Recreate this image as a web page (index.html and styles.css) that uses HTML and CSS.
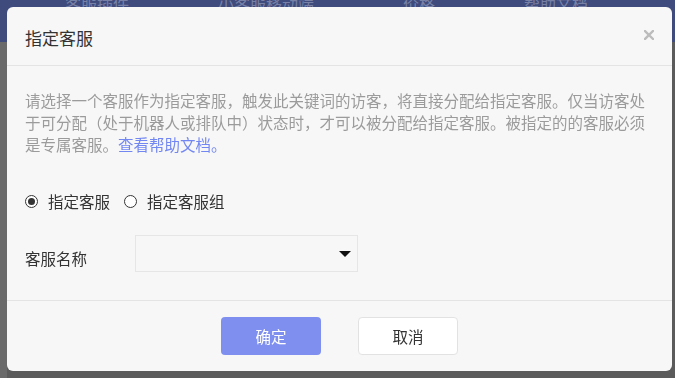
FILE: index.html
```html
<!DOCTYPE html>
<html lang="zh-CN">
<head>
  <meta charset="UTF-8">
  <meta name="viewport" content="width=device-width, initial-scale=1.0">
  <title>指定客服</title>
  <link rel="stylesheet" href="styles.css">
</head>
<body>
  <div class="page">
    <div class="topbar">
      <div class="nav">
        <span class="nav-item">客服插件</span>
        <span class="nav-item">小客服移动端</span>
        <span class="nav-item">价格</span>
        <span class="nav-item">帮助文档</span>
      </div>
    </div>
    <div class="backdrop"></div>
  </div>

  <div class="modal">
    <div class="modal-header">
      <h2 class="modal-title">指定客服</h2>
      <svg class="close" width="10" height="10" viewBox="0 0 10 10">
        <path d="M1 1 L9 9 M9 1 L1 9" stroke="#bcbcbc" stroke-width="2.4" stroke-linecap="square"/>
      </svg>
    </div>

    <div class="modal-body">
      <p class="tips">请选择一个客服作为指定客服，触发此关键词的访客，将直接分配给指定客服。仅当访客处于可分配（处于机器人或排队中）状态时，才可以被分配给指定客服。被指定的的客服必须是专属客服。<a class="link" href="#">查看帮助文档。</a></p>

      <div class="radios">
        <label class="radio checked"><span class="dot"></span>指定客服</label>
        <label class="radio"><span class="dot"></span>指定客服组</label>
      </div>

      <div class="form-row">
        <span class="form-label">客服名称</span>
        <div class="select">
          <span class="caret"></span>
        </div>
      </div>
    </div>

    <div class="modal-footer">
      <button type="button" class="btn btn-primary">确定</button>
      <button type="button" class="btn btn-default">取消</button>
    </div>
  </div>
</body>
</html>
```

FILE: styles.css
```css
* {
  margin: 0;
  padding: 0;
  box-sizing: border-box;
  font-family: "Noto Sans CJK SC", "Noto Sans", sans-serif;
}

body {
  width: 675px;
  height: 378px;
  overflow: hidden;
  background: #5a5a5a;
}

.page {
  display: flex;
  flex-direction: column;
  height: 100%;
}

/* dimmed page behind the dialog */
.topbar {
  height: 42px;
  background: #3e4b7c;
  overflow: hidden;
}

.nav {
  display: flex;
  gap: 89px;
  padding-left: 65px;
  margin-top: -5px;
}

.nav-item {
  font-size: 16px;
  line-height: 16px;
  color: #7880a6;
}

.backdrop {
  flex: 1;
  background: #5b5b5b;
  border-left: 7px solid #6a6a6a;
}

.modal {
  position: fixed;
  left: 7px;
  top: 7px;
  width: 665px;
  height: 364px;
  background: #f7f7f7;
  border-radius: 6px;
  display: flex;
  flex-direction: column;
}

.modal-header {
  height: 59px;
  padding: 3px 18px 0;
  display: flex;
  align-items: center;
  justify-content: space-between;
  border-bottom: 1px solid #e4e4e4;
}

.modal-title {
  font-size: 17px;
  font-weight: normal;
  color: #333;
}

.close {
  margin-top: -5px;
}

.modal-body {
  padding: 23px 18px 0;
  height: 235px;
  border-bottom: 1px solid #e4e4e4;
}

.tips {
  width: 628px;
  font-size: 15.5px;
  line-height: 22px;
  color: #9b9b9b;
}

.link {
  color: #7387f3;
  text-decoration: none;
}

.radios {
  display: flex;
  gap: 14px;
  margin-top: 35px;
}

.radio {
  display: flex;
  align-items: center;
  gap: 10px;
  font-size: 15.5px;
  line-height: 22px;
  color: #333;
}

.dot {
  width: 13px;
  height: 13px;
  border: 1px solid #333;
  border-radius: 50%;
  display: flex;
  align-items: center;
  justify-content: center;
  background: #fff;
}

.radio.checked .dot::after {
  content: "";
  width: 7px;
  height: 7px;
  border-radius: 50%;
  background: #333;
}

.form-row {
  display: flex;
  align-items: center;
  margin-top: 23px;
}

.form-label {
  width: 110px;
  padding-top: 8px;
  font-size: 15.5px;
  color: #333;
}

.select {
  width: 223px;
  height: 37px;
  border: 1px solid #e6e6e6;
  display: flex;
  align-items: center;
  justify-content: flex-end;
  padding-right: 6px;
}

.caret {
  width: 0;
  height: 0;
  border-left: 6px solid transparent;
  border-right: 6px solid transparent;
  border-top: 6px solid #111;
  margin-top: 1px;
}

.modal-footer {
  display: flex;
  justify-content: center;
  gap: 37px;
  padding-top: 16px;
}

.btn {
  width: 100px;
  height: 38px;
  border-radius: 4px;
  font-size: 15.5px;
  cursor: pointer;
}

.btn-primary {
  background: #7f8ff0;
  border: none;
  color: #fff;
}

.btn-default {
  background: #fff;
  border: 1px solid #e2e2e2;
  color: #333;
}
```
